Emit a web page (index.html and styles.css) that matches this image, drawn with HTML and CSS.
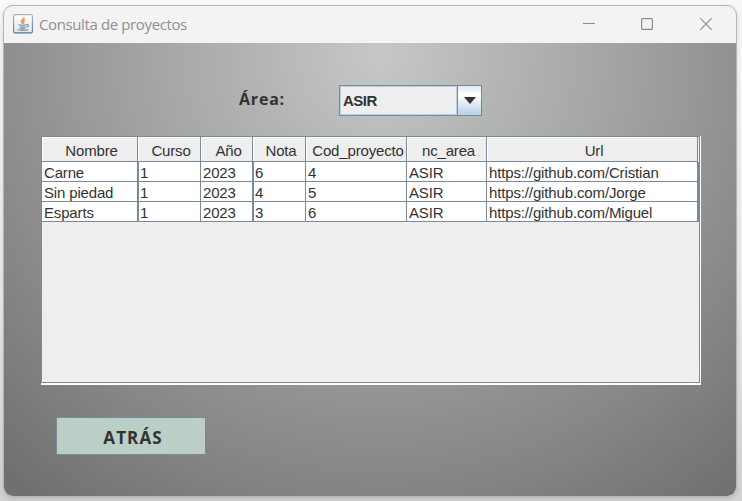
FILE: index.html
```html
<!DOCTYPE html>
<html lang="es">
<head>
<meta charset="utf-8">
<title>Consulta de proyectos</title>
<link rel="stylesheet" href="styles.css">
</head>
<body>
<div class="window">
  <header class="titlebar">
    <svg class="java" width="20" height="20" viewBox="0 0 20 20">
      <defs><linearGradient id="tile" x1="0" y1="0" x2="0" y2="1"><stop offset="0" stop-color="#fff"/><stop offset="1" stop-color="#e3e6e9"/></linearGradient>
      <linearGradient id="edge" x1="0" y1="0" x2="0" y2="1"><stop offset="0" stop-color="#a5b4c2"/><stop offset="1" stop-color="#58748f"/></linearGradient></defs>
      <rect x=".6" y=".6" width="18.8" height="18.3" rx="1.5" fill="url(#tile)" stroke="url(#edge)" stroke-width="1.1"/>
      <path d="M10.8 3.3c.7 1.8-2.6 2.7-2.3 4.500.1.8.9 1.3 1.2 2M12 5.800c-1.500.700-2.400 1.400-1.500 2.300.6.7.3 1.200-.3 1.800" fill="none" stroke="#ee9a5a" stroke-width="1.6"/>
      <path d="M5.500 10.500c2 .8 6 .8 8.200 0M6.400 12.500c2 .8 4.700.8 6.300 0M7 14.200c1.600.6 3.800.6 5.200 0M4.300 15.400c1.500 1.300 9 1.300 11 0M13.500 10.600c2.800-.6 2.500 2-.1 2.500" fill="none" stroke="#7892aa" stroke-width="1.2"/>
    </svg>
    <h1 class="title">Consulta de proyectos</h1>
    <svg class="controls" width="132" height="14" viewBox="0 0 132 14" fill="none" stroke="#8b8b8b">
      <path d="M0 6.5h12"/>
      <rect x="58.6" y="1.6" width="10.8" height="10.8" rx="1" stroke-width="1.2"/>
      <path d="M117.2 1.2l11.6 11.6M128.800 1.200l-11.600 11.600" stroke-width="1.1"/>
    </svg>
  </header>
  <main class="content">
    <div class="filter">
      <span class="label">Área:</span>
      <div class="combo">
        <span class="value">ASIR</span>
        <span class="arrow"><svg width="12" height="7" viewBox="0 0 12 7"><path d="M0 0h12L6 7z" fill="#333"/></svg></span>
      </div>
    </div>
    <div class="scroll">
      <table class="projects">
        <colgroup><col class="c-name"><col class="c-course"><col class="c-year"><col class="c-grade"><col class="c-code"><col class="c-area"><col class="c-url"></colgroup>
        <thead><tr><th>Nombre</th><th>Curso</th><th>Año</th><th>Nota</th><th>Cod_proyecto</th><th>nc_area</th><th>Url</th></tr></thead>
        <tbody>
          <tr><td>Carne</td><td>1</td><td>2023</td><td>6</td><td>4</td><td>ASIR</td><td>https://github.com/Cristian</td></tr>
          <tr><td>Sin piedad</td><td>1</td><td>2023</td><td>4</td><td>5</td><td>ASIR</td><td>https://github.com/Jorge</td></tr>
          <tr><td>Esparts</td><td>1</td><td>2023</td><td>3</td><td>6</td><td>ASIR</td><td>https://github.com/Miguel</td></tr>
        </tbody>
      </table>
    </div>
    <button class="back">ATRÁS</button>
  </main>
</div>
</body>
</html>
```
FILE: styles.css
```css
* { box-sizing: border-box; }
body {
  margin: 0;
  height: 501px;
  padding: 5px 5px 4px 3px;
  overflow: hidden;
  background: linear-gradient(#f8f8f8, #e9e9e9 60%, #d2d2d2);
  font-family: "Liberation Sans", Arial, sans-serif;
  color: #333;
}
.window {
  width: 734px;
  height: 492px;
  border: 1px solid #b5b5b5;
  border-radius: 10px;
  overflow: hidden;
  background: #f3f3f3;
  box-shadow: 0 2px 5px rgba(0, 0, 0, .12);
}
.titlebar {
  display: flex;
  align-items: center;
  height: 37px;
  padding: 0 21px 1px 9px;
}
.title {
  margin: 0 0 0 6px;
  font: 400 15px/20px "Open Sans", "Noto Sans", sans-serif;
  letter-spacing: -.38px;
  color: #8f8f8f;
}
.controls { margin-left: auto; }
.content {
  height: 453px;
  padding: 42px 35px 0 37px;
  background: radial-gradient(circle at 376px 13px, #c5c8c6 0, #929292 350px, #70706e 560px);
}
.filter { display: flex; padding-left: 198px; }
.label {
  width: 100px;
  font: 700 16px/28px "Open Sans", "Noto Sans", sans-serif;
  letter-spacing: .8px;
}
.combo {
  display: flex;
  width: 143px;
  height: 31px;
  border: 1px solid #7a8a99;
}
.value {
  flex: 1;
  border: 1px solid #b8cfe5;
  background: #eee;
  padding-left: 2px;
  font-size: 15px;
  font-weight: 700;
  line-height: 28px;
  letter-spacing: -.5px;
}
.arrow {
  display: flex;
  align-items: center;
  justify-content: center;
  width: 24px;
  border-left: 1px solid #7a8a99;
  background: linear-gradient(#dde8f3, #fff 30%, #b8cfe5);
}
.scroll {
  width: 660px;
  height: 249px;
  margin-top: 20px;
  border: solid #fff;
  border-width: 0 1px 2px 0;
  background: #eee;
  box-shadow: inset 1px 1px #7a8a99, inset -1px -1px #7a8a99;
  padding: 1px 0 0 1px;
}
.projects {
  width: 656px;
  table-layout: fixed;
  border-collapse: separate;
  border-spacing: 0;
  font-size: 15px;
  letter-spacing: -.16px;
}
.c-name { width: 96px; }
.c-course { width: 63px; }
.c-year { width: 52px; }
.c-grade { width: 53px; }
.c-code { width: 101px; }
.c-area { width: 80px; }
.c-url { width: 211px; }
th, td {
  padding: 0;
  border: solid #7a8a99;
  border-width: 0 1px 1px 0;
  white-space: nowrap;
}
th {
  height: 25px;
  padding: 4px 0 0 4px;
  font-weight: 400;
  line-height: 20px;
  box-shadow: inset 1px 1px #fff;
}
td {
  height: 20px;
  padding: 2px 0 0 2px;
  background: #fff;
  line-height: 17px;
}
td:nth-child(7) {
  letter-spacing: -.14px;
  box-shadow: 1px 0 #7a8a99;
}
td:nth-child(2), td:nth-child(4) { box-shadow: inset 1px 0 #7a8a99; }
.back {
  display: block;
  width: 150px;
  height: 38px;
  margin: 32px 0 0 15px;
  padding: 4px 0 0 4px;
  border: 1px solid #7a8a99;
  background: #bbcfc6;
  color: #333;
  font: 700 17px/22px "Open Sans", "Noto Sans", sans-serif;
  letter-spacing: 1.1px;
}
```
